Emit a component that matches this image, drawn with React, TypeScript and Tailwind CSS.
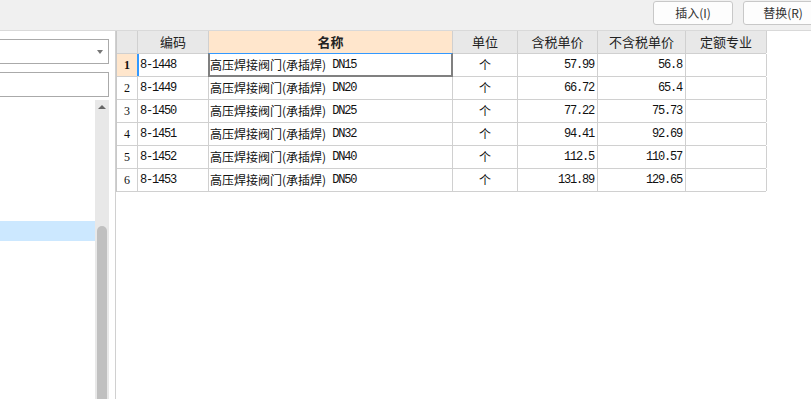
import React from "react";

type Row = {
  code: string;
  name: string;
  unit: string;
  taxPrice: string;
  price: string;
};

const rows: Row[] = [
  { code: "8-1448", name: "DN15", unit: "个", taxPrice: "57.99", price: "56.8" },
  { code: "8-1449", name: "DN20", unit: "个", taxPrice: "66.72", price: "65.4" },
  { code: "8-1450", name: "DN25", unit: "个", taxPrice: "77.22", price: "75.73" },
  { code: "8-1451", name: "DN32", unit: "个", taxPrice: "94.41", price: "92.69" },
  { code: "8-1452", name: "DN40", unit: "个", taxPrice: "112.5", price: "110.57" },
  { code: "8-1453", name: "DN50", unit: "个", taxPrice: "131.89", price: "129.65" },
];

const ui = { fontFamily: '"Noto Sans CJK SC", "Liberation Sans", sans-serif' };
const mono = { fontFamily: '"Liberation Mono", "Noto Sans CJK SC", monospace' };
const serif = { fontFamily: '"Liberation Serif", "Noto Sans CJK SC", serif' };

const HeaderCell = ({
  w,
  children,
  active,
}: {
  w: string;
  children?: React.ReactNode;
  active?: boolean;
}) => (
  <div
    className={`${w} h-full shrink-0 border-r border-[#d0d0d0] flex items-center justify-center text-[13px] text-[#222] ${
      active ? "bg-[#ffe6cc] font-bold" : ""
    }`}
  >
    {children}
  </div>
);

export default function App() {
  return (
    <div className="w-[811px] h-[399px] bg-white overflow-hidden flex flex-col" style={ui}>
      {/* Toolbar */}
      <div className="h-[31px] shrink-0 bg-[#f0f0f0] border-b border-[#d9d9d9] flex justify-end items-start pt-[1px] overflow-hidden">
        <div className="flex gap-[10px] mr-[-12px]">
          <button className="w-[80px] h-[24px] rounded-[3px] border border-[#c8c8c8] bg-[#fdfdfd] text-[12px] text-[#333]">
            插入(I)
          </button>
          <button className="w-[80px] h-[24px] rounded-[3px] border border-[#c8c8c8] bg-[#fdfdfd] text-[12px] text-[#333]">
            替换(R)
          </button>
        </div>
      </div>

      <div className="flex flex-1 min-h-0">
        {/* Left panel */}
        <div className="w-[116px] shrink-0 border-r border-[#d0d0d0] pr-[6px] flex flex-col overflow-hidden">
          <div className="mt-[8px] h-[25px] -ml-[2px] border border-[#aaaaaa] bg-white flex items-center justify-end pr-[5px]">
            <span className="w-0 h-0 border-l-[3px] border-r-[3px] border-t-[4px] border-l-transparent border-r-transparent border-t-[#777]" />
          </div>
          <div className="mt-[8px] h-[25px] -ml-[2px] border border-[#aaaaaa] bg-white" />
          <div className="mt-[3px] flex flex-1 min-h-0">
            <div className="w-[95px] shrink-0">
              <div className="mt-[121px] h-[20px] bg-[#cce8ff]" />
            </div>
            <div className="w-[14px] shrink-0 bg-[#e8e8e8] flex flex-col items-center">
              <span className="mt-[5px] w-0 h-0 border-l-[4px] border-r-[4px] border-b-[4px] border-l-transparent border-r-transparent border-b-[#666]" />
              <div className="mt-[117px] w-[10px] flex-1 rounded-t-[5px] bg-[#c0c0c0]" />
            </div>
          </div>
        </div>

        {/* Grid */}
        <div className="flex-1">
          <div className="w-[650px] border-l border-[#c8c8c8]">
            <div className="h-[23px] flex bg-[#e8e8e8] border-b border-[#d0d0d0]">
              <HeaderCell w="w-[21px]" />
              <HeaderCell w="w-[71px]">编码</HeaderCell>
              <HeaderCell w="w-[244px]" active>
                名称
              </HeaderCell>
              <HeaderCell w="w-[65px]">单位</HeaderCell>
              <HeaderCell w="w-[80px]">含税单价</HeaderCell>
              <HeaderCell w="w-[88px]">不含税单价</HeaderCell>
              <HeaderCell w="w-[81px]">定额专业</HeaderCell>
            </div>
            {rows.map((r, i) => (
              <div key={r.code} className="h-[23px] flex border-b border-[#d0d0d0] text-[12px] text-[#111]">
                <div
                  className={`w-[21px] shrink-0 border-r border-[#d0d0d0] flex items-center justify-center text-[12px] ${
                    i === 0 ? "bg-[#ffe6cc] font-bold" : ""
                  }`}
                  style={serif}
                >
                  {i + 1}
                </div>
                <div className="w-[71px] shrink-0 border-r border-[#d0d0d0] flex items-center pl-[2px] relative tracking-[-1.2px]" style={mono}>
                  {i === 0 && <span className="absolute left-[-1px] top-0 bottom-0 w-[2px] bg-[#3399ff]" />}
                  {r.code}
                </div>
                <div className="w-[244px] shrink-0 border-r border-[#d0d0d0] flex items-center pl-[1px] relative">
                  {i === 0 && (
                    <span className="absolute left-[-1px] top-[-1px] right-[-1px] bottom-[-1px] border-2 border-[#808080] border-t border-t-[#3399ff]" />
                  )}
                  <span>高压焊接阀门(承插焊)</span>
                  <span className="ml-[6px] tracking-[-1.2px]" style={mono}>
                    {r.name}
                  </span>
                </div>
                <div className="w-[65px] shrink-0 border-r border-[#d0d0d0] flex items-center justify-center">
                  {r.unit}
                </div>
                <div className="w-[80px] shrink-0 border-r border-[#d0d0d0] flex items-center justify-end pr-[3px] tracking-[-1.2px]" style={mono}>
                  {r.taxPrice}
                </div>
                <div className="w-[88px] shrink-0 border-r border-[#d0d0d0] flex items-center justify-end pr-[3px] tracking-[-1.2px]" style={mono}>
                  {r.price}
                </div>
                <div className="w-[81px] shrink-0 border-r border-[#d0d0d0]" />
              </div>
            ))}
          </div>
        </div>
      </div>
    </div>
  );
}
